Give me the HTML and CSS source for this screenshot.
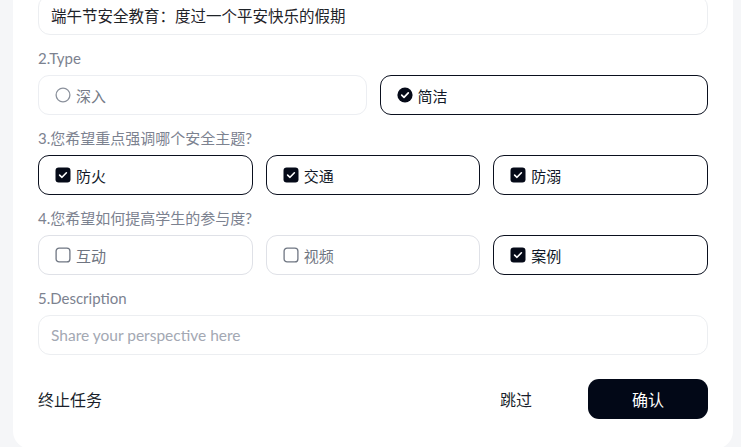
FILE: index.html
```html
<!DOCTYPE html>
<html lang="zh-CN">
<head>
<meta charset="utf-8">
<title>Survey</title>
<link rel="stylesheet" href="styles.css">
</head>
<body>
<div class="card">
  <div class="form">
    <div class="field input filled">端午节安全教育：度过一个平安快乐的假期</div>

    <div class="section">
      <div class="label">2.Type</div>
      <div class="row cols-2">
        <div class="opt opt-soft">
          <svg class="ico" viewBox="0 0 16 16"><circle cx="8" cy="8" r="6.9" fill="none" stroke="#8b919c" stroke-width="1.3"/></svg>
          <span>深入</span>
        </div>
        <div class="opt opt-on">
          <svg class="ico" viewBox="0 0 16 16"><circle cx="8" cy="8" r="7.6" fill="#050a18"/><path d="M4.7 8.2 L7 10.4 L11.3 5.9" fill="none" stroke="#fff" stroke-width="1.7" stroke-linecap="round" stroke-linejoin="round"/></svg>
          <span>简洁</span>
        </div>
      </div>
    </div>

    <div class="section">
      <div class="label">3.您希望重点强调哪个安全主题?</div>
      <div class="row cols-3">
        <div class="opt opt-on">
          <svg class="ico" viewBox="0 0 16 16"><rect x="0.5" y="0.5" width="15" height="15" rx="3.2" fill="#050a18"/><path d="M4.6 8.1 L7 10.3 L11.4 5.8" fill="none" stroke="#fff" stroke-width="1.6" stroke-linecap="round" stroke-linejoin="round"/></svg>
          <span>防火</span>
        </div>
        <div class="opt opt-on">
          <svg class="ico" viewBox="0 0 16 16"><rect x="0.5" y="0.5" width="15" height="15" rx="3.2" fill="#050a18"/><path d="M4.6 8.1 L7 10.3 L11.4 5.8" fill="none" stroke="#fff" stroke-width="1.6" stroke-linecap="round" stroke-linejoin="round"/></svg>
          <span>交通</span>
        </div>
        <div class="opt opt-on">
          <svg class="ico" viewBox="0 0 16 16"><rect x="0.5" y="0.5" width="15" height="15" rx="3.2" fill="#050a18"/><path d="M4.6 8.1 L7 10.3 L11.4 5.8" fill="none" stroke="#fff" stroke-width="1.6" stroke-linecap="round" stroke-linejoin="round"/></svg>
          <span>防溺</span>
        </div>
      </div>
    </div>

    <div class="section">
      <div class="label">4.您希望如何提高学生的参与度?</div>
      <div class="row cols-3">
        <div class="opt opt-off">
          <svg class="ico" viewBox="0 0 16 16"><rect x="1.1" y="1.1" width="13.8" height="13.8" rx="3" fill="none" stroke="#6f7682" stroke-width="1.3"/></svg>
          <span>互动</span>
        </div>
        <div class="opt opt-off">
          <svg class="ico" viewBox="0 0 16 16"><rect x="1.1" y="1.1" width="13.8" height="13.8" rx="3" fill="none" stroke="#6f7682" stroke-width="1.3"/></svg>
          <span>视频</span>
        </div>
        <div class="opt opt-on">
          <svg class="ico" viewBox="0 0 16 16"><rect x="0.5" y="0.5" width="15" height="15" rx="3.2" fill="#050a18"/><path d="M4.6 8.1 L7 10.3 L11.4 5.8" fill="none" stroke="#fff" stroke-width="1.6" stroke-linecap="round" stroke-linejoin="round"/></svg>
          <span>案例</span>
        </div>
      </div>
    </div>

    <div class="section">
      <div class="label">5.Description</div>
      <div class="field input placeholder">Share your perspective here</div>
    </div>
  </div>

  <div class="footer">
    <div class="link">终止任务</div>
    <div class="actions">
      <div class="link">跳过</div>
      <div class="btn">确认</div>
    </div>
  </div>
</div>
</body>
</html>
```

FILE: styles.css
```css
html, body {
  margin: 0;
  padding: 0;
}
body {
  background: #f5f6f8;
  font-family: Lato, "Noto Sans CJK SC", sans-serif;
  overflow: hidden;
}
.card {
  box-sizing: border-box;
  width: 720px;
  margin: -29px 0 0 13px;
  padding: 24px 25px 30px;
  background: #fff;
  border-radius: 0 0 18px 18px;
}
.form {
  display: flex;
  flex-direction: column;
  gap: 12px;
}
.section {
  display: flex;
  flex-direction: column;
  gap: 6px;
}
.label {
  font-size: 15px;
  line-height: 22px;
  color: #7c8290;
  height: 22px;
}
.field {
  box-sizing: border-box;
  height: 40px;
  border: 1px solid #eceef1;
  border-radius: 12px;
  padding: 0 12px;
  display: flex;
  align-items: center;
  font-size: 15.5px;
}
.filled {
  color: #1f2329;
}
.placeholder {
  color: #a3a8b3;
}
.row {
  display: grid;
  gap: 13px;
}
.cols-2 { grid-template-columns: 1fr 1fr; }
.cols-3 { grid-template-columns: 1fr 1fr 1fr; }
.opt {
  box-sizing: border-box;
  height: 40px;
  border-radius: 11px;
  display: flex;
  align-items: center;
  gap: 5px;
  padding: 0 16px;
  font-size: 15px;
}
.opt-on {
  border: 1px solid #0a0f1e;
  color: #111827;
}
.opt-soft {
  border: 1px solid #eceef2;
  color: #757b87;
}
.opt-off {
  border: 1px solid #dfe1e7;
  color: #6f7581;
}
.ico {
  width: 16px;
  height: 16px;
  flex: none;
}
.footer {
  margin-top: 24px;
  display: flex;
  justify-content: space-between;
  align-items: center;
}
.actions {
  display: flex;
  align-items: center;
}
.link {
  font-size: 16px;
  color: #1a1f2b;
}
.actions .link {
  margin-right: 56px;
}
.btn {
  width: 120px;
  height: 40px;
  border-radius: 11px;
  background: #020817;
  color: #fff;
  font-size: 16px;
  display: flex;
  align-items: center;
  justify-content: center;
}
```
